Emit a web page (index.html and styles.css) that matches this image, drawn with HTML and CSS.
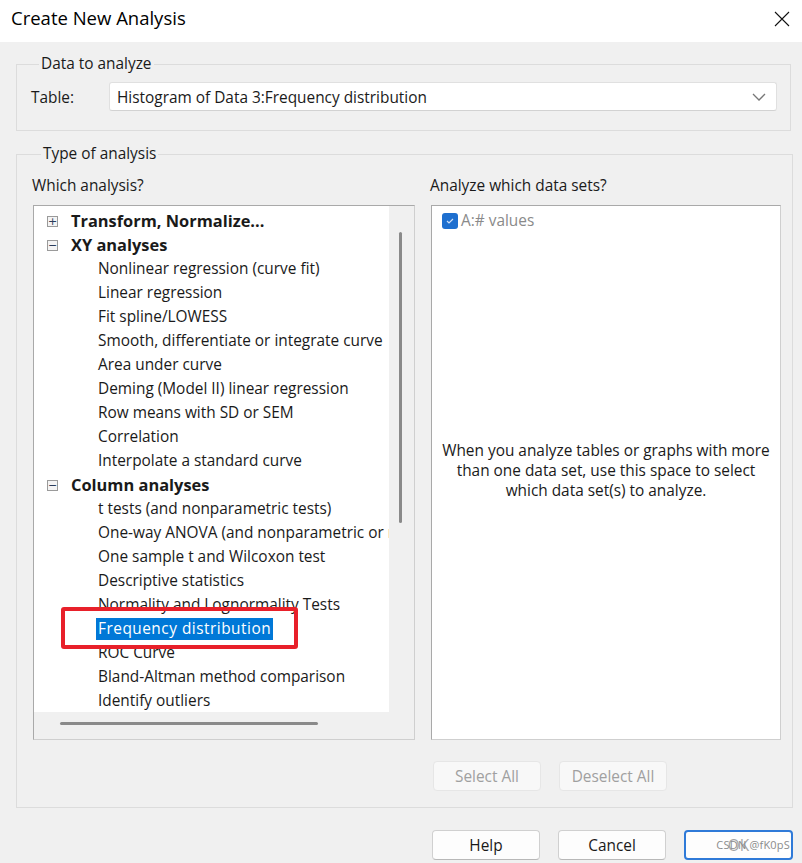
FILE: index.html
```html
<!DOCTYPE html>
<html>
<head>
<meta charset="utf-8">
<link rel="stylesheet" href="styles.css">
</head>
<body>
<div class="dialog">
  <div class="titlebar">
    <span class="title">Create New Analysis</span>
    <svg class="close" width="16" height="16" viewBox="0 0 16 16"><path d="M1 1 L15 15 M15 1 L1 15" stroke="#111" stroke-width="1.1" fill="none"/></svg>
  </div>
  <div class="main">
    <fieldset class="group g1">
      <legend>Data to analyze</legend>
      <div class="tablerow">
        <span class="tlabel">Table:</span>
        <div class="select">
          <span>Histogram of Data 3:Frequency distribution</span>
          <svg width="14" height="8" viewBox="0 0 14 8"><path d="M1 1 L7 7 L13 1" stroke="#777" stroke-width="1.3" fill="none"/></svg>
        </div>
      </div>
    </fieldset>
    <fieldset class="group g2">
      <legend>Type of analysis</legend>
      <div class="cols">
        <div class="col left">
          <div class="clabel">Which analysis?</div>
          <div class="treebox">
            <div class="tree">
              <div class="row head"><span class="exp">+</span>Transform, Normalize...</div>
              <div class="row head"><span class="exp">−</span>XY analyses</div>
              <div class="row child">Nonlinear regression (curve fit)</div>
              <div class="row child">Linear regression</div>
              <div class="row child">Fit spline/LOWESS</div>
              <div class="row child">Smooth, differentiate or integrate curve</div>
              <div class="row child">Area under curve</div>
              <div class="row child">Deming (Model II) linear regression</div>
              <div class="row child">Row means with SD or SEM</div>
              <div class="row child">Correlation</div>
              <div class="row child">Interpolate a standard curve</div>
              <div class="row head"><span class="exp">−</span>Column analyses</div>
              <div class="row child">t tests (and nonparametric tests)</div>
              <div class="row child">One-way ANOVA (and nonparametric or mixed)</div>
              <div class="row child">One sample t and Wilcoxon test</div>
              <div class="row child">Descriptive statistics</div>
              <div class="row child">Normality and Lognormality Tests</div>
              <div class="row child"><span class="sel">Frequency distribution</span></div>
              <div class="row child">ROC Curve</div>
              <div class="row child">Bland-Altman method comparison</div>
              <div class="row child">Identify outliers</div>
              <div class="redmark"></div>
            </div>
            <div class="vscroll"><div class="vthumb"></div></div>
            <div class="hscroll"><div class="hthumb"></div></div>
            <div class="corner"></div>
          </div>
        </div>
        <div class="col right">
          <div class="clabel">Analyze which data sets?</div>
          <div class="setbox">
            <div class="setitem">
              <span class="check"><svg width="10" height="8" viewBox="0 0 10 8"><path d="M2 4 L4 6 L8 2" stroke="#cfe0f7" stroke-width="1.2" fill="none"/></svg></span>
              <span class="setname">A:# values</span>
            </div>
            <div class="hint">When you analyze tables or graphs with more than one data set, use this space to select which data set(s) to analyze.</div>
          </div>
          <div class="btnrow">
            <button class="btn disabled">Select All</button>
            <button class="btn disabled">Deselect All</button>
          </div>
        </div>
      </div>
    </fieldset>
    <div class="footer">
      <button class="btn">Help</button>
      <button class="btn">Cancel</button>
      <button class="btn ok">OK<span class="wm">CSDN @fK0pS</span></button>
    </div>
  </div>
</div>
</body>
</html>
```
FILE: styles.css
```css
* { box-sizing: border-box; }
html, body { margin: 0; padding: 0; }
body {
  width: 802px;
  height: 863px;
  overflow: hidden;
  background: #f0f0f0;
  font-family: "Open Sans", "Noto Sans", sans-serif;
  font-size: 15.4px;
  color: #1a1a1a;
}
.dialog { width: 802px; height: 863px; }
.titlebar {
  height: 42px;
  background: #ffffff;
  display: flex;
  align-items: center;
  justify-content: space-between;
  padding: 0 11px 7px 11px;
}
.title { font-size: 18.5px; color: #000; }
.close { margin-right: 1px; margin-top: 3px; }
.main { padding: 12px 0 0 16px; }
.group {
  margin: 0;
  border: 1px solid #dcdcdc;
  padding: 0;
}
.group legend {
  margin-left: 8px;
  padding: 0 2px;
  line-height: 20px;
}
.g1 { width: 775px; padding: 8px 0 19px 14px; }
.tablerow { display: flex; align-items: center; }
.tlabel { width: 78px; padding-top: 1px; }
.select {
  width: 668px;
  height: 29px;
  background: #fff;
  border: 1px solid #e0e0e0;
  border-bottom-color: #d2d2d2;
  border-radius: 3px;
  display: flex;
  align-items: center;
  justify-content: space-between;
  padding: 1px 10px 0 7px;
}
.g2 { width: 777px; margin-top: 13px; padding: 10px 0 16px 16px; }
.cols { display: flex; gap: 16px; }
.clabel { line-height: 20px; margin-left: -1px; padding-top: 2px; margin-bottom: 9px; }
.treebox {
  width: 382px;
  height: 535px;
  border: 1px solid #a9a9a9;
  border-right-color: #cfcfcf;
  border-bottom-color: #cfcfcf;
  display: grid;
  grid-template-columns: 1fr 25px;
  grid-template-rows: 1fr 27px;
  background: #f0f0f0;
}
.tree {
  position: relative;
  background: #fff;
  overflow: hidden;
  padding-top: 3px;
}
.row {
  height: 24px;
  line-height: 24px;
  white-space: nowrap;
  display: flex;
  align-items: center;
}
.head { font-weight: 700; padding-left: 13px; font-size: 16.4px; }
.child { padding-left: 64px; }
.exp {
  width: 11px;
  height: 11px;
  border: 1px solid #9a9a9a;
  background: #f4f4f4;
  font-size: 11px;
  line-height: 9px;
  text-align: center;
  font-weight: 400;
  color: #2a3c5a;
  margin-right: 13px;
  font-family: "DejaVu Sans", sans-serif;
  flex: none;
}
.sel {
  background: #0078d7;
  color: #fff;
  padding: 0 2px;
  margin-left: -2px;
  line-height: 22px;
  letter-spacing: 0.5px;
}
.redmark {
  position: absolute;
  left: 27px;
  top: 401px;
  width: 237px;
  height: 42px;
  border: 4px solid #e8202a;
  border-radius: 3px;
}
.vscroll { position: relative; }
.vthumb {
  position: absolute;
  left: 10px;
  top: 26px;
  width: 3px;
  height: 291px;
  background: #8a8a8a;
  border-radius: 2px;
}
.hscroll { position: relative; }
.hthumb {
  position: absolute;
  left: 26px;
  top: 10px;
  width: 258px;
  height: 3px;
  background: #8a8a8a;
  border-radius: 2px;
}
.setbox {
  width: 350px;
  height: 535px;
  background: #fff;
  border: 1px solid #a9a9a9;
  border-right-color: #cfcfcf;
  border-bottom-color: #cfcfcf;
  position: relative;
  display: flex;
  align-items: center;
  justify-content: center;
}
.setitem {
  position: absolute;
  left: 10px;
  top: 4px;
  display: flex;
  align-items: center;
  gap: 3px;
}
.check {
  width: 16px;
  height: 16px;
  background: #1e6fcf;
  border-radius: 3px;
  display: flex;
  align-items: center;
  justify-content: center;
}
.setname { color: #8a8a8a; }
.hint {
  text-align: center;
  width: 340px;
  line-height: 20px;
  margin-top: -4px;
  color: #1a1a1a;
}
.btnrow { display: flex; gap: 18px; margin-top: 21px; padding-left: 2px; }
.btn {
  width: 108px;
  height: 30px;
  font-family: inherit;
  font-size: 15.4px;
  background: #fdfdfd;
  border: 1px solid #d0d0d0;
  border-bottom-color: #b8b8b8;
  border-radius: 4px;
  color: #1a1a1a;
  padding: 0;
  position: relative;
}
.btn.disabled {
  background: #f8f8f8;
  border-color: #e6e6e6;
  color: #a0a0a0;
}
.footer { display: flex; gap: 18px; margin-top: 22px; padding-left: 416px; }
.btn.ok { border: 2px solid #2f7ad8; width: 109px; }
.wm {
  position: absolute;
  right: 1px;
  top: 5px;
  font-size: 11px;
  color: #8c8c8c;
  background: rgba(255,255,255,0.6);
  letter-spacing: 0.2px;
}
```
